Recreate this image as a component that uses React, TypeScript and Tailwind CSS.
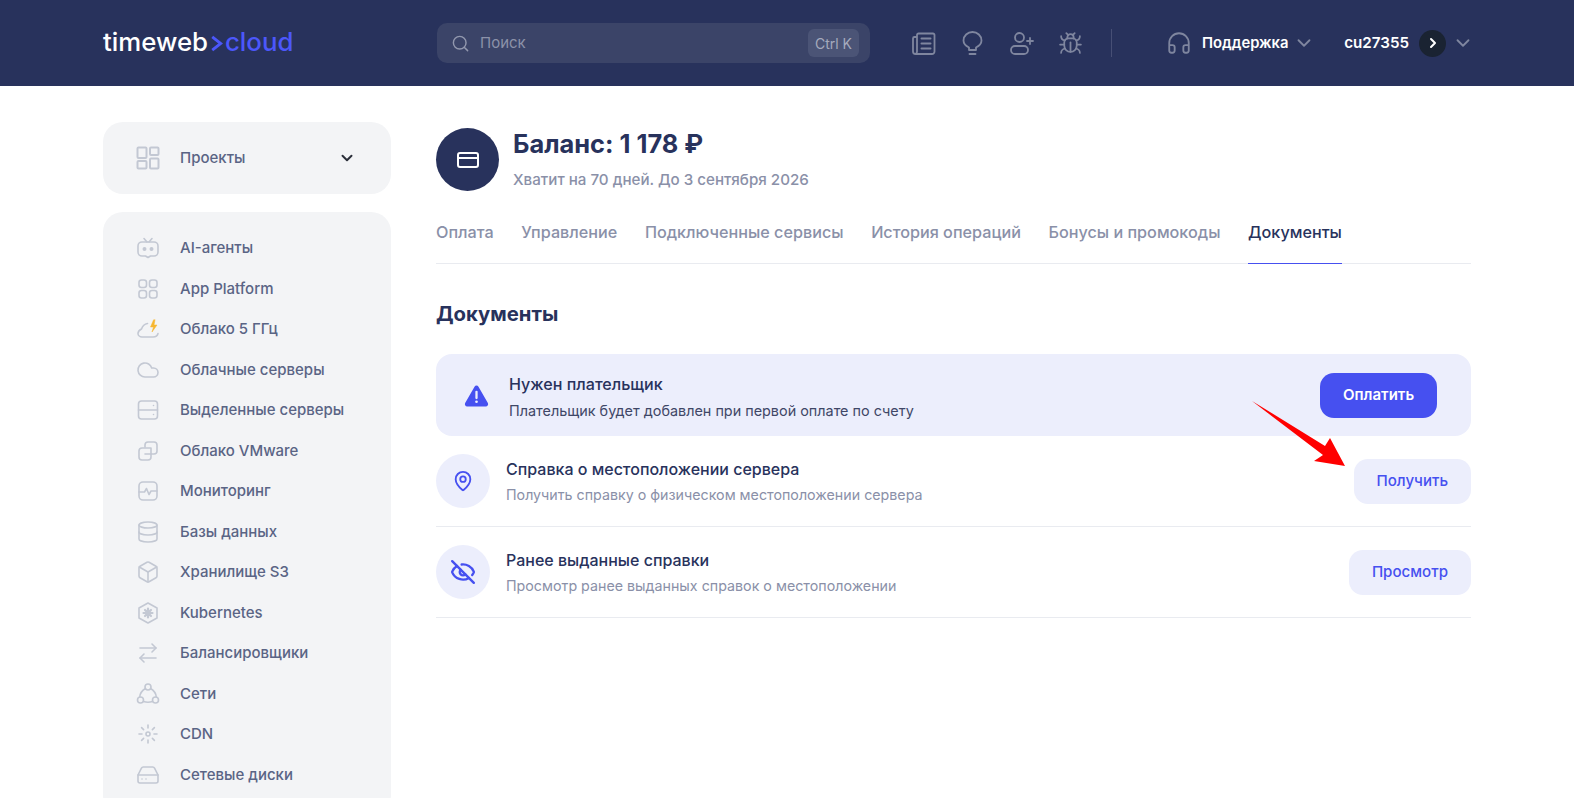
import React from 'react';
import { Search, Bug, Headphones, ChevronDown, ChevronRight, CreditCard, MapPin, EyeOff, Cloud, Database, Box, ArrowRightLeft, HardDrive } from 'lucide-react';

const ic = 'w-[24px] h-[24px] text-[#c3c8d3]';

function Svg({ children }: { children: React.ReactNode }) {
    return (
        <svg viewBox="0 0 24 24" fill="none" stroke="currentColor" strokeWidth="1.6" strokeLinecap="round" strokeLinejoin="round" className={ic}>
            {children}
        </svg>
    );
}

const navItems: { label: string; icon: React.ReactNode }[] = [
    { label: 'AI-агенты', icon: <Svg><path d="M6 6h12a4 4 0 0 1 4 4v6a4 4 0 0 1-4 4h-3.500L12 21.500 9.500 20H6a4 4 0 0 1-4-4v-6a4 4 0 0 1 4-4z" /><path d="M8 2.500 11 6M16 2.500 13 6" /><circle cx="8.500" cy="13" r="1.200" fill="currentColor" /><circle cx="15.500" cy="13" r="1.200" fill="currentColor" /></Svg> },
    { label: 'App Platform', icon: <Svg><rect x="3" y="3" width="7.500" height="7.500" rx="2.500" /><rect x="13.500" y="3" width="7.500" height="7.500" rx="2.500" /><rect x="3" y="13.500" width="7.500" height="7.500" rx="2.500" /><rect x="13.500" y="13.500" width="7.500" height="7.500" rx="2.500" /></Svg> },
    { label: 'Облако 5 ГГц', icon: <Svg><path d="M11.500 6.500C8.500 7 6.500 9 5.500 12 3.500 13 2 14.500 2 16.500 2 18.500 4 20 6 20h11c2.500 0 4.500-1.200 5-3.500" /><path d="M17.500 3 14.500 10h3l-1.500 5 5-7h-3l1-5z" fill="#f7b731" stroke="#f7b731" strokeWidth="0.5" /></Svg> },
    { label: 'Облачные серверы', icon: <Cloud className={ic} strokeWidth={1.6} /> },
    { label: 'Выделенные серверы', icon: <Svg><rect x="2.500" y="3" width="19" height="18" rx="3" /><path d="M2.500 12h19" /><path d="M17.500 7.500h.01M17.500 16.500h.01" /></Svg> },
    { label: 'Облако VMware', icon: <Svg><path d="M9 8V6a3 3 0 0 1 3-3h6a3 3 0 0 1 3 3v6a3 3 0 0 1-3 3h-3" /><path d="M15 9H6a3 3 0 0 0-3 3v6a3 3 0 0 0 3 3h6a3 3 0 0 0 3-3z" /><path d="M9 15h6" /></Svg> },
    { label: 'Мониторинг', icon: <Svg><rect x="3" y="3" width="18" height="18" rx="4" /><path d="M3 13h5.500l2-3.500 2.500 6 2-3.500H21" /></Svg> },
    { label: 'Базы данных', icon: <Database className={ic} strokeWidth={1.6} /> },
    { label: 'Хранилище S3', icon: <Box className={ic} strokeWidth={1.6} /> },
    { label: 'Kubernetes', icon: <Svg><path d="M12 2 21 7v10l-9 5-9-5V7z" /><path d="M12 7.500v9M7.500 12h9M9 9l6 6M15 9l-6 6" strokeWidth="2.200" /></Svg> },
    { label: 'Балансировщики', icon: <ArrowRightLeft className={ic} strokeWidth={1.6} /> },
    { label: 'Сети', icon: <Svg><circle cx="12" cy="5" r="3" /><circle cx="4.500" cy="18" r="3" /><circle cx="19.500" cy="18" r="3" /><path d="M9.500 6.500C6 8.500 4 11.500 3.700 15M14.500 6.500c3.500 2 5.500 5 5.800 8.500M7.500 19.500c3 1 6 1 9 0" /></Svg> },
    { label: 'CDN', icon: <Svg><circle cx="12" cy="12" r="2" /><path d="M12 3v3M12 18v3M3 12h3M18 12h3M5.600 5.600l2 2M16.400 16.400l2 2M5.600 18.400l2-2M16.400 7.600l2-2" /></Svg> },
    { label: 'Сетевые диски', icon: <HardDrive className={ic} strokeWidth={1.6} /> },
];

const tabs = ['Оплата', 'Управление', 'Подключенные сервисы', 'История операций', 'Бонусы и промокоды', 'Документы'];

function DocRow({ icon, title, text, action }: { icon: React.ReactNode; title: string; text: string; action: string }) {
    return (
        <div className="h-[91px] flex items-center border-b border-[#e9ebf0]">
            <div className="w-[54px] h-[54px] rounded-full bg-[#eceefc] flex items-center justify-center shrink-0 text-[#4650f0]">{icon}</div>
            <div className="ml-[16px] flex-1 pt-[2px]">
                <div className="text-[16px] leading-[20px] font-medium text-[#28325c]">{title}</div>
                <div className="mt-[6px] text-[14.250px] leading-[20px] text-[#8a90a8]">{text}</div>
            </div>
            <button className="h-[45px] px-[23px] rounded-[14px] bg-[#eceefc] text-[15.100px] font-medium text-[#4650f0]">{action}</button>
        </div>
    );
}

export default function App() {
    return (
        <div className="w-full h-[798px] overflow-hidden bg-white font-['Inter','Noto_Sans',sans-serif]">
            <header className="h-[86px] bg-[#28325c] flex items-center pl-[103px] pr-[100px]">
                <div className="w-[334px] flex items-center text-[25.800px] font-medium leading-none pb-[2px]">
                    <span className="text-white">timeweb</span>
                    <svg viewBox="0 0 10 14" className="w-[13px] h-[17px] mx-[2px] mt-[3px]" fill="none" stroke="#4c57fb" strokeWidth="2.400"><path d="M1.500 1.500 8.500 7l-7 5.500" /></svg>
                    <span className="text-[#4c57fb]">cloud</span>
                </div>
                <div className="w-[433px] h-[40px] rounded-[10px] bg-[#3b4468] flex items-center pl-[14px] pr-[11px]">
                    <Search className="w-[19px] h-[19px] text-[#9298ae]" strokeWidth={1.8} />
                    <span className="ml-[10px] text-[15px] text-[#8c92a9] flex-1">Поиск</span>
                    <span className="h-[28px] px-[7px] flex items-center rounded-[6px] bg-[#4b5476] text-[14px] text-[#a5aabd]">Ctrl K</span>
                </div>
                <div className="ml-[41px] flex items-center gap-[24px] text-[#7f869f]">
                    <svg viewBox="0 0 25 25" className="w-[25px] h-[25px]" fill="none" stroke="currentColor" strokeWidth="1.800" strokeLinecap="round" strokeLinejoin="round">
                        <path d="M6 6H3.500A1.500 1.500 0 0 0 2 7.500v13A2.500 2.500 0 0 0 4.500 23H21a2.500 2.500 0 0 0 2.500-2.500V4A1.500 1.500 0 0 0 22 2.500H7.500A1.500 1.500 0 0 0 6 4v16.500A2.500 2.500 0 0 1 4.500 23" />
                        <path d="M10.500 7.500h9M10.500 12.500h9M10.500 17.500h9" strokeWidth="2" />
                    </svg>
                    <svg viewBox="0 0 25 25" className="w-[25px] h-[25px]" fill="none" stroke="currentColor" strokeWidth="1.800" strokeLinecap="round" strokeLinejoin="round">
                        <path d="M9 19v-2.500C6 15 3.500 12.500 3.500 9.500a9 8.500 0 0 1 18 0c0 3-2.500 5.500-5.500 7V19z" />
                        <path d="M9.500 23h6" />
                    </svg>
                    <svg viewBox="0 0 25 25" className="w-[25px] h-[25px]" fill="none" stroke="currentColor" strokeWidth="1.800" strokeLinecap="round" strokeLinejoin="round">
                        <circle cx="10.500" cy="6.500" r="4.500" />
                        <rect x="2" y="15" width="17" height="8" rx="4" />
                        <path d="M21 7v6M18 10h6" />
                    </svg>
                    <Bug className="w-[25px] h-[25px]" strokeWidth={1.7} />
                </div>
                <div className="ml-[28px] w-px h-[28px] bg-[#474f75]" />
                <Headphones className="ml-[54px] w-[26px] h-[26px] text-[#7f869f]" strokeWidth={1.7} />
                <span className="ml-[10px] text-[14.800px] font-semibold text-white">Поддержка</span>
                <ChevronDown className="ml-[4px] w-[22px] h-[22px] text-[#7f869f]" strokeWidth={2} />
                <span className="ml-auto text-[15.200px] font-semibold text-white">cu27355</span>
                <span className="ml-[10px] w-[27px] h-[27px] rounded-full bg-[#1a2332] flex items-center justify-center">
                    <ChevronRight className="w-[16px] h-[16px] text-white" strokeWidth={3} />
                </span>
                <ChevronDown className="ml-[6px] w-[22px] h-[22px] text-[#7f869f]" strokeWidth={2} />
            </header>

            <div className="flex gap-[45px] pl-[103px] pr-[103px] pt-[36px]">
                <aside className="w-[288px] shrink-0">
                    <div className="h-[72px] rounded-[20px] bg-[#f3f4f6] flex items-center pl-[33px] pr-[35px]">
                        <svg viewBox="0 0 24 24" className="w-[24px] h-[24px] text-[#c3c8d3]" fill="none" stroke="currentColor" strokeWidth="2">
                            <rect x="1.500" y="1.500" width="9" height="10.500" rx="1" />
                            <rect x="14" y="1.500" width="8.500" height="7.500" rx="1" />
                            <rect x="1.500" y="15" width="9" height="7.500" rx="1" />
                            <rect x="14" y="12.500" width="8.500" height="10" rx="1" />
                        </svg>
                        <span className="ml-[20px] flex-1 text-[15px] font-medium text-[#5a6485]">Проекты</span>
                        <ChevronDown className="w-[18px] h-[18px] text-[#2b2f3a]" strokeWidth={2.600} />
                    </div>
                    <div className="mt-[18px] rounded-[20px] bg-[#f3f4f6] pt-[16px] pb-[20px] pl-[33px]">
                        {navItems.map(item => (
                            <div key={item.label} className="h-[40.500px] flex items-center">
                                <span className="w-[24px] h-[24px] flex items-center justify-center">{item.icon}</span>
                                <span className="ml-[20px] text-[15px] font-medium text-[#5a6485]">{item.label}</span>
                            </div>
                        ))}
                    </div>
                </aside>

                <main className="flex-1 min-w-0">
                    <div className="flex items-center pt-[6px]">
                        <div className="w-[63px] h-[63px] rounded-full bg-[#28325c] flex items-center justify-center">
                            <CreditCard className="w-[24px] h-[24px] text-white" strokeWidth={2} />
                        </div>
                        <div className="ml-[14px]">
                            <div className="text-[25.400px] leading-[32px] -mt-[1px] font-bold text-[#28325c]">Баланс: 1 178 ₽</div>
                            <div className="mt-[10px] text-[15.150px] leading-[20px] font-medium text-[#8a90a8]">Хватит на 70 дней. До 3 сентября 2026</div>
                        </div>
                    </div>
                    <nav className="mt-[28px] flex gap-[27.600px] border-b border-[#e9ebf0] h-[45px]">
                        {tabs.map(t => (
                            <span key={t} className={t === 'Документы' ? 'h-[45px] text-[16.200px] leading-[26px] font-medium text-[#28325c] border-b border-[#4650f0]' : 'text-[16.200px] leading-[26px] font-medium text-[#8a90a8]'}>{t}</span>
                        ))}
                    </nav>
                    <h2 className="mt-[34px] text-[20.300px] leading-[32px] font-bold text-[#28325c]">Документы</h2>
                    <div className="relative mt-[24px]">
                        <div className="h-[82px] rounded-[16px] bg-[#eceefc] flex items-center pl-[28px] pr-[34px]">
                            <svg viewBox="0 0 24 22" className="w-[25px] h-[23px]">
                                <path d="M12 1.500c.8 0 1.500.4 1.900 1.100l9 15.500c.8 1.500-.2 3.400-2 3.400H3.100c-1.800 0-2.800-1.900-2-3.400l9-15.500C10.500 1.900 11.200 1.500 12 1.500z" fill="#4650f0" />
                                <path d="M12 7.500v6" stroke="#eceefc" strokeWidth="2.200" strokeLinecap="round" />
                                <circle cx="12" cy="17" r="1.300" fill="#eceefc" />
                            </svg>
                            <div className="ml-[20px] flex-1 pt-[4px]">
                                <div className="text-[16.100px] leading-[20px] font-medium text-[#28325c]">Нужен плательщик</div>
                                <div className="mt-[7px] text-[14.400px] leading-[20px] text-[#3f4767]">Плательщик будет добавлен при первой оплате по счету</div>
                            </div>
                            <button className="h-[45px] w-[117px] rounded-[14px] bg-[#4650f0] text-[15px] font-semibold text-white">Оплатить</button>
                        </div>
                        <DocRow icon={<MapPin className="w-[22px] h-[22px]" strokeWidth={2} />} title="Справка о местоположении сервера" text="Получить справку о физическом местоположении сервера" action="Получить" />
                        <DocRow icon={<EyeOff className="w-[26px] h-[26px]" strokeWidth={2.200} />} title="Ранее выданные справки" text="Просмотр ранее выданных справок о местоположении" action="Просмотр" />
                        <svg viewBox="0 0 93 65" className="absolute left-[816px] top-[47px] w-[93px] h-[65px]">
                            <path d="M0 0 73 45 78 37 93 65 62 60 71 54z" fill="#ff0000" />
                        </svg>
                    </div>
                </main>
            </div>
        </div>
    );
}
